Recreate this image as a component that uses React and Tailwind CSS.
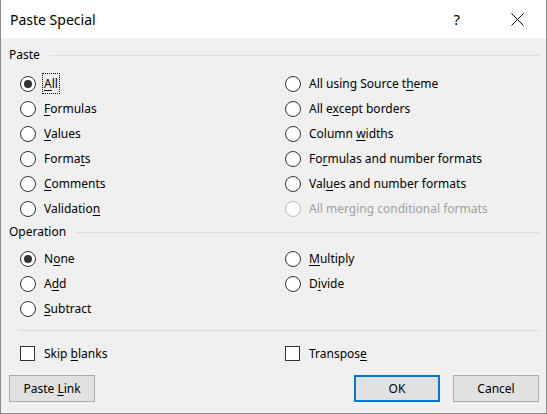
import React from 'react';

const font = { fontFamily: '"Segoe UI", "Noto Sans", sans-serif' };

const Key = ({ children }) => <span className="underline underline-offset-[2px] decoration-1">{children}</span>;

const Radio = ({ checked, disabled }) => (
  <span
    className={`flex h-[16px] w-[16px] shrink-0 items-center justify-center rounded-full border bg-white ${
      disabled ? 'border-[#bcbcbc]' : 'border-[#333333]'
    }`}
  >
    {checked && <span className="h-[8px] w-[8px] rounded-full bg-[#333333]" />}
  </span>
);

const RadioRow = ({ checked, disabled, focus, children }) => (
  <div className="flex h-[25px] items-center gap-[8px]">
    <Radio checked={checked} disabled={disabled} />
    <span
      className={`${disabled ? 'text-[#a0a0a0]' : 'text-black'} ${
        focus ? 'outline outline-1 outline-dotted outline-black outline-offset-[1px] leading-[17px]' : ''
      }`}
    >
      {children}
    </span>
  </div>
);

const GroupHeader = ({ children, className }) => (
  <div className={`flex h-[18px] items-center pl-[8px] pr-[7px] ${className}`}>
    <span>{children}</span>
    <div className="ml-[10px] h-px flex-1 bg-[#dcdcdc]" />
  </div>
);

const Button = ({ children, primary }) => (
  <button
    className={`h-[27px] w-[86px] bg-[#e1e1e1] text-black ${
      primary ? 'border-2 border-[#0078d7]' : 'border border-[#adadad]'
    }`}
  >
    {children}
  </button>
);

export default function App() {
  return (
    <div className="w-[547px] h-[414px] text-[12px] text-black" style={font}>
      <div className="flex h-full w-full flex-col border-x border-b border-[#8a8a8a] bg-[#f0f0f0]">
        {/* title bar */}
        <div className="flex h-[38px] items-center bg-white pl-[9px]">
          <span className="flex-1 text-[14px]">Paste Special</span>
          <span className="mr-[51px] text-[15px]">?</span>
          <svg width="13" height="13" viewBox="0 0 13 13" className="mr-[22px]">
            <path d="M0.5 0.5 L12.5 12.5 M12.5 0.5 L0.5 12.5" stroke="#000" strokeWidth="1" />
          </svg>
        </div>

        <GroupHeader className="mt-[8px]">Paste</GroupHeader>
        <div className="mt-[7px] grid grid-cols-[265px_1fr] pl-[19px]">
          <div className="flex flex-col">
            <RadioRow checked focus><Key>A</Key>ll</RadioRow>
            <RadioRow><Key>F</Key>ormulas</RadioRow>
            <RadioRow><Key>V</Key>alues</RadioRow>
            <RadioRow>Forma<Key>t</Key>s</RadioRow>
            <RadioRow><Key>C</Key>omments</RadioRow>
            <RadioRow>Validatio<Key>n</Key></RadioRow>
          </div>
          <div className="flex flex-col">
            <RadioRow>All using Source t<Key>h</Key>eme</RadioRow>
            <RadioRow>All e<Key>x</Key>cept borders</RadioRow>
            <RadioRow>Column <Key>w</Key>idths</RadioRow>
            <RadioRow>Fo<Key>r</Key>mulas and number formats</RadioRow>
            <RadioRow>Val<Key>u</Key>es and number formats</RadioRow>
            <RadioRow disabled>All mer<Key>g</Key>ing conditional formats</RadioRow>
          </div>
        </div>

        <GroupHeader className="mt-[2px]">Operation</GroupHeader>
        <div className="mt-[5px] grid grid-cols-[265px_1fr] pl-[19px]">
          <div className="flex flex-col">
            <RadioRow checked>N<Key>o</Key>ne</RadioRow>
            <RadioRow>A<Key>d</Key>d</RadioRow>
            <RadioRow><Key>S</Key>ubtract</RadioRow>
          </div>
          <div className="flex flex-col">
            <RadioRow><Key>M</Key>ultiply</RadioRow>
            <RadioRow>D<Key>i</Key>vide</RadioRow>
          </div>
        </div>

        <div className="mx-[18px] mt-[9px] mr-[7px] h-px bg-[#dcdcdc]" />

        <div className="mt-[10px] grid h-[25px] grid-cols-[265px_1fr] items-center pl-[19px]">
          <div className="flex items-center gap-[9px]">
            <span className="h-[15px] w-[15px] border border-[#333333] bg-white" />
            <span>Skip <Key>b</Key>lanks</span>
          </div>
          <div className="flex items-center gap-[9px]">
            <span className="h-[15px] w-[15px] border border-[#333333] bg-white" />
            <span>Transpos<Key>e</Key></span>
          </div>
        </div>

        <div className="mt-[9px] flex pl-[8px] pr-[7px]">
          <Button>Paste <Key>L</Key>ink</Button>
          <div className="flex-1" />
          <Button primary>OK</Button>
          <div className="w-[13px]" />
          <Button>Cancel</Button>
        </div>
      </div>
    </div>
  );
}
